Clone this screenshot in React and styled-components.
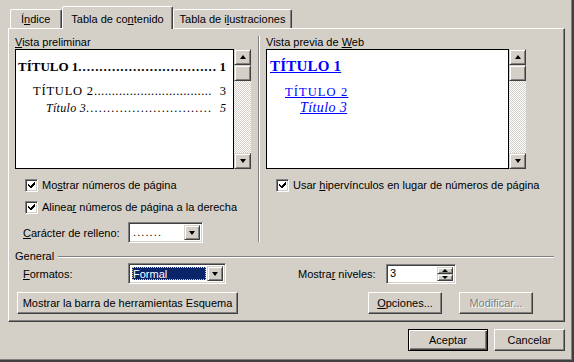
import React from "react";
import styled, { createGlobalStyle, css } from "styled-components";

const Global = createGlobalStyle`
  html, body { margin: 0; padding: 0; background: #d4d0c8; }
  body { font-family: "Liberation Sans", Arial, sans-serif; font-size: 11px; color: #000; }
  * { box-sizing: border-box; }
`;

const raised = css`
  border: 1px solid;
  border-color: #ffffff #404040 #404040 #ffffff;
  box-shadow: inset -1px -1px #808080;
`;

const scrollRaised = css`
  border: 1px solid;
  border-color: #d4d0c8 #404040 #404040 #d4d0c8;
  box-shadow: inset 1px 1px #ffffff, inset -1px -1px #808080;
`;

const sunken = css`
  border: 1px solid;
  border-color: #808080 #ffffff #ffffff #808080;
  box-shadow: inset 1px 1px #404040, inset -1px -1px #d4d0c8;
`;

const Window = styled.div`
  width: 574px;
  height: 362px;
  background: #d4d0c8;
  border-right: 2px solid #404040;
  border-bottom: 2px solid #404040;
  box-shadow: inset -1px -1px #808080;
  padding: 6px 7px 0 8px;
  display: flex;
  flex-direction: column;
  overflow: hidden;
`;

const TabRow = styled.div`
  display: flex;
  align-items: flex-end;
  height: 22px;
  padding-left: 2px;
  position: relative;
  z-index: 2;
`;

const Tab = styled.div`
  width: ${(p) => p.$w}px;
  height: ${(p) => (p.$active ? 23 : 19)}px;
  margin-bottom: ${(p) => (p.$active ? -1 : 0)}px;
  padding-top: ${(p) => (p.$active ? 6 : 3)}px;
  padding-left: ${(p) => p.$pl || 0}px;
  background: #d4d0c8;
  border-top: 1px solid #ffffff;
  border-left: 1px solid #ffffff;
  border-right: 1px solid #404040;
  box-shadow: inset -1px 0 #808080;
  border-top-left-radius: 2px;
  border-top-right-radius: 2px;
  line-height: 13px;
  white-space: nowrap;
  text-align: ${(p) => (p.$pl ? "left" : "center")};
`;

const Panel = styled.div`
  height: 294px;
  border: 1px solid;
  border-color: #ffffff #404040 #404040 #ffffff;
  box-shadow: inset -1px -1px #808080;
  padding: 6px 6px 0 6px;
  display: flex;
  flex-direction: column;
`;

const Upper = styled.div`
  display: flex;
  align-items: stretch;
`;

const Col = styled.div`
  width: ${(p) => p.$w}px;
  display: flex;
  flex-direction: column;
`;

const VSep = styled.div`
  width: 2px;
  margin: 1px 6px 1px 7px;
  border-left: 1px solid #808080;
  border-right: 1px solid #ffffff;
`;

const GroupLabel = styled.div`
  line-height: 14px;
  height: 14px;
  white-space: nowrap;
`;

const Preview = styled.div`
  display: flex;
  height: 120px;
`;

const PreviewBody = styled.div`
  flex: 1;
  background: #ffffff;
  border: 1px solid #000000;
  padding: ${(p) => p.$pad};
  display: flex;
  flex-direction: column;
  overflow: hidden;
`;

const ScrollBar = styled.div`
  width: 17px;
  display: flex;
  flex-direction: column;
`;

const ScrollBtn = styled.div`
  height: 16px;
  background: #d4d0c8;
  ${scrollRaised};
  display: flex;
  align-items: center;
  justify-content: center;
`;

const Track = styled.div`
  flex: 1;
  background: repeating-conic-gradient(#ffffff 0 25%, #d4d0c8 0 50%) 0 0 / 2px 2px;
`;

const Arrow = styled.span`
  width: 0;
  height: 0;
  border-left: ${(p) => p.$half || 4}px solid transparent;
  border-right: ${(p) => p.$half || 4}px solid transparent;
  ${(p) =>
    p.$dir === "up"
      ? css`border-bottom: ${p.$h || 4}px solid #000;`
      : css`border-top: ${p.$h || 4}px solid #000;`}
`;

const TocLine = styled.div`
  display: flex;
  align-items: baseline;
  margin-top: ${(p) => p.$mt}px;
  padding-left: ${(p) => p.$indent}px;
  font-family: "Liberation Serif", "Times New Roman", serif;
  font-size: ${(p) => p.$size}px;
  line-height: ${(p) => p.$lh}px;
  font-weight: ${(p) => (p.$bold ? 700 : 400)};
  font-style: ${(p) => (p.$italic ? "italic" : "normal")};
  white-space: nowrap;
`;

const Title = styled.span`
  flex: none;
  letter-spacing: ${(p) => p.$ls || 0}px;
`;

const Leader = styled.span`
  flex: 1;
  min-width: 0;
  overflow: hidden;
  white-space: nowrap;
  font-style: normal;
  text-align: left;
  letter-spacing: ${(p) => p.$ls || 0}px;
`;

const Num = styled.span`
  flex: none;
  padding-left: ${(p) => p.$pl || 0}px;
`;

const LinkLine = styled.a`
  display: block;
  align-self: flex-start;
  margin-top: ${(p) => p.$mt}px;
  margin-left: ${(p) => p.$indent}px;
  font-family: "Liberation Serif", "Times New Roman", serif;
  font-size: ${(p) => p.$size}px;
  line-height: ${(p) => p.$lh}px;
  letter-spacing: ${(p) => p.$ls || 0}px;
  font-weight: ${(p) => (p.$bold ? 700 : 400)};
  font-style: ${(p) => (p.$italic ? "italic" : "normal")};
  color: #0000ff;
  text-decoration: underline;
  white-space: nowrap;
`;

const CheckRow = styled.div`
  display: flex;
  align-items: center;
  height: 13px;
  margin-top: ${(p) => p.$mt}px;
  padding-left: 10px;
  gap: 4px;
  white-space: nowrap;
  line-height: 13px;
`;

const CheckBox = styled.span`
  width: 13px;
  height: 13px;
  flex: none;
  background: #ffffff;
  ${sunken};
  display: flex;
  align-items: center;
  justify-content: center;
`;

const FieldRow = styled.div`
  display: flex;
  align-items: center;
  height: 21px;
  margin-top: ${(p) => p.$mt}px;
  padding-left: 8px;
  white-space: nowrap;
`;

const FieldLabel = styled.span`
  width: ${(p) => p.$w}px;
  margin-left: ${(p) => p.$ml || 0}px;
  flex: none;
`;

const Combo = styled.div`
  width: ${(p) => p.$w}px;
  height: ${(p) => p.$h || 21}px;
  background: #ffffff;
  ${sunken};
  padding: 2px;
  display: flex;
  align-items: stretch;
`;

const ComboText = styled.div`
  flex: 1;
  display: flex;
  align-items: center;
  padding-left: ${(p) => p.$pl || 2}px;
  line-height: 13px;
  letter-spacing: ${(p) => p.$ls || 0}px;
`;

const Selected = styled.div`
  flex: 1;
  margin: 1px;
  background: #0a246a;
  color: #ffffff;
  outline: 1px dotted #e0d090;
  outline-offset: -1px;
  padding-left: 1px;
  display: flex;
  align-items: center;
`;

const DropBtn = styled.div`
  width: 16px;
  background: #d4d0c8;
  ${scrollRaised};
  display: flex;
  align-items: center;
  justify-content: center;
`;

const SpinBtns = styled.div`
  width: 16px;
  display: flex;
  flex-direction: column;
`;

const SpinBtn = styled.div`
  flex: 1;
  background: #d4d0c8;
  ${scrollRaised};
  display: flex;
  align-items: center;
  justify-content: center;
`;

const GeneralRow = styled.div`
  display: flex;
  align-items: center;
  height: 13px;
  margin-top: 7px;
  line-height: 13px;
`;

const Rule = styled.div`
  flex: 1;
  height: 2px;
  margin: 0 4px 0 4px;
  border-top: 1px solid #808080;
  border-bottom: 1px solid #ffffff;
`;

const ButtonRow = styled.div`
  display: flex;
  align-items: center;
  margin-top: ${(p) => p.$mt}px;
  padding-left: ${(p) => p.$pl || 0}px;
  justify-content: ${(p) => p.$justify || "flex-start"};
`;

const Button = styled.div`
  width: ${(p) => p.$w}px;
  height: 22px;
  margin-left: ${(p) => p.$ml || 0}px;
  background: #d4d0c8;
  display: flex;
  align-items: center;
  justify-content: center;
  white-space: nowrap;
  line-height: 13px;
  color: ${(p) => (p.$disabled ? "#808080" : "#000")};
  text-shadow: ${(p) => (p.$disabled ? "1px 1px #ffffff" : "none")};
  ${(p) =>
    p.$default
      ? css`
          border: 1px solid #000;
          box-shadow: inset 1px 1px #ffffff, inset -1px -1px #404040, inset -2px -2px #808080;
        `
      : raised}
`;

const Check = () => (
  <svg width="9" height="9" viewBox="0 0 9 9" shapeRendering="crispEdges">
    <path d="M1 3h1v1h1v1h1V4h1V3h1V2h1V1h1v3H7v1H6v1H5v1H3V6H2V5H1z" fill="#000" />
  </svg>
);

const Scroll = () => (
  <ScrollBar>
    <ScrollBtn>
      <Arrow $dir="up" $half={3.5} $h={4} />
    </ScrollBtn>
    <ScrollBtn />
    <Track />
    <ScrollBtn>
      <Arrow $dir="down" $half={3.5} $h={4} />
    </ScrollBtn>
  </ScrollBar>
);

const tocEntries = [
  { title: "TÍTULO 1", num: "1", mt: 9, indent: 0, size: 13, lh: 15, bold: true, dots: 33, ls: 0.95, numPad: 0, tls: 0 },
  { title: "TÍTULO 2", num: "3", mt: 10, indent: 15, size: 12.5, lh: 14, dots: 33, ls: 0.45, numPad: 3, tls: 0.8 },
  { title: "Título 3", num: "5", mt: 3, indent: 28, size: 12, lh: 14, italic: true, dots: 30, ls: 1.2, numPad: 3, tls: 0.3 },
];

const webEntries = [
  { title: "TÍTULO 1", mt: 8, indent: 0, size: 15, lh: 17, bold: true, ls: 0.2 },
  { title: "TÍTULO 2", mt: 10, indent: 15, size: 12.5, lh: 14, ls: 1.1 },
  { title: "Título 3", mt: 1, indent: 30, size: 14, lh: 16, italic: true, ls: 0.4 },
];

export default function App() {
  return (
    <>
      <Global />
      <Window>
        <TabRow>
          <Tab $w={52} $pl={10}>
            Í<u>n</u>dice
          </Tab>
          <Tab $w={111} $active>
            Tabla de co<u>n</u>tenido
          </Tab>
          <Tab $w={119}>
            Tabla de i<u>l</u>ustraciones
          </Tab>
        </TabRow>
        <Panel>
          <Upper>
            <Col $w={236}>
              <GroupLabel>
                <u>V</u>ista preliminar
              </GroupLabel>
              <Preview>
                <PreviewBody $pad="0 7px 0 2px">
                  {tocEntries.map((e) => (
                    <TocLine
                      key={e.title}
                      $mt={e.mt}
                      $indent={e.indent}
                      $size={e.size}
                      $lh={e.lh}
                      $bold={e.bold}
                      $italic={e.italic}
                    >
                      <Title $ls={e.tls}>{e.title}</Title>
                      <Leader $ls={e.ls}>{".".repeat(e.dots)}</Leader>
                      <Num $pl={e.numPad}>{e.num}</Num>
                    </TocLine>
                  ))}
                </PreviewBody>
                <Scroll />
              </Preview>
              <CheckRow $mt={10}>
                <CheckBox>
                  <Check />
                </CheckBox>
                <span>
                  Mo<u>s</u>trar números de página
                </span>
              </CheckRow>
              <CheckRow $mt={9}>
                <CheckBox>
                  <Check />
                </CheckBox>
                <span>
                  Alinea<u>r</u> números de página a la derecha
                </span>
              </CheckRow>
              <FieldRow $mt={8}>
                <FieldLabel $w={105}>
                  <u>C</u>arácter de relleno:
                </FieldLabel>
                <Combo $w={75}>
                  <ComboText $ls={1.1}>.......</ComboText>
                  <DropBtn>
                    <Arrow $dir="down" $half={3.5} $h={4} />
                  </DropBtn>
                </Combo>
              </FieldRow>
            </Col>
            <VSep />
            <Col $w={260}>
              <GroupLabel>
                Vista previa de <u>W</u>eb
              </GroupLabel>
              <Preview>
                <PreviewBody $pad="0 0 0 3px">
                  {webEntries.map((e) => (
                    <LinkLine
                      key={e.title}
                      $mt={e.mt}
                      $indent={e.indent}
                      $size={e.size}
                      $lh={e.lh}
                      $bold={e.bold}
                      $italic={e.italic}
                      $ls={e.ls}
                    >
                      {e.title}
                    </LinkLine>
                  ))}
                </PreviewBody>
                <Scroll />
              </Preview>
              <CheckRow $mt={10}>
                <CheckBox>
                  <Check />
                </CheckBox>
                <span>
                  Usar <u>h</u>ipervínculos en lugar de números de página
                </span>
              </CheckRow>
            </Col>
          </Upper>
          <GeneralRow>
            <span>General</span>
            <Rule />
          </GeneralRow>
          <FieldRow $mt={0}>
            <FieldLabel $w={105}>
              <u>F</u>ormatos:
            </FieldLabel>
            <Combo $w={98}>
              <Selected>Formal</Selected>
              <DropBtn>
                <Arrow $dir="down" $half={3.5} $h={4} />
              </DropBtn>
            </Combo>
            <FieldLabel $w={88} $ml={72}>
              Mostra<u>r</u> niveles:
            </FieldLabel>
            <Combo $w={70} $h={20}>
              <ComboText $pl={1}>3</ComboText>
              <SpinBtns>
                <SpinBtn>
                  <Arrow $dir="up" $half={3} $h={3} />
                </SpinBtn>
                <SpinBtn>
                  <Arrow $dir="down" $half={3} $h={3} />
                </SpinBtn>
              </SpinBtns>
            </Combo>
          </FieldRow>
          <ButtonRow $mt={8} $pl={2}>
            <Button $w={221}>Mostrar la barra de herramientas Esquema</Button>
            <Button $w={74} $ml={130}>
              <span>
                <u>O</u>pciones...
              </span>
            </Button>
            <Button $w={74} $ml={17} $disabled>
              Modificar...
            </Button>
          </ButtonRow>
        </Panel>
        <ButtonRow $mt={7} $justify="flex-end">
          <Button $w={80} $default>
            Aceptar
          </Button>
          <Button $w={71} $ml={6}>
            Cancelar
          </Button>
        </ButtonRow>
      </Window>
    </>
  );
}
